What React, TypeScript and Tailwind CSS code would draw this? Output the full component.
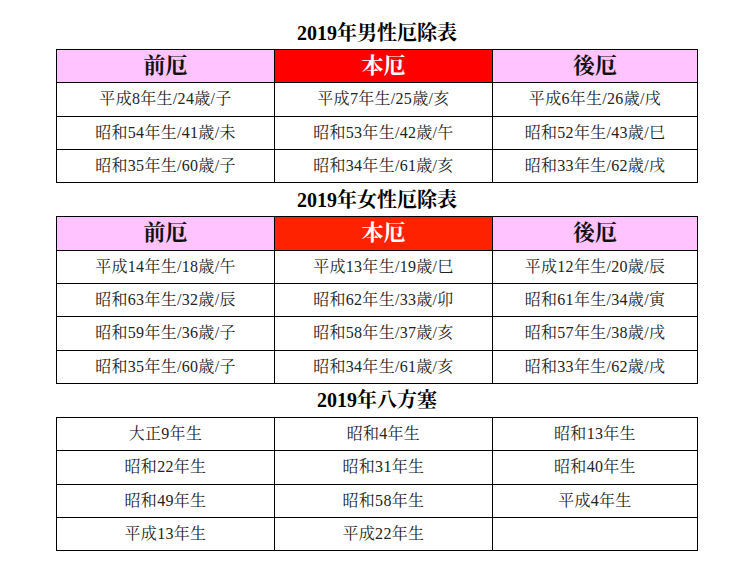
const font = {
  fontFamily: '"Liberation Serif", "Noto Serif CJK JP", "Noto Sans CJK JP", serif',
}

type Table = {
  title: string
  honBg?: string
  rows: string[][]
}

const tables: Table[] = [
  {
    title: "2019年男性厄除表",
    honBg: "bg-[#ff0000]",
    rows: [
      ["平成8年生/24歳/子", "平成7年生/25歳/亥", "平成6年生/26歳/戌"],
      ["昭和54年生/41歳/未", "昭和53年生/42歳/午", "昭和52年生/43歳/巳"],
      ["昭和35年生/60歳/子", "昭和34年生/61歳/亥", "昭和33年生/62歳/戌"],
    ],
  },
  {
    title: "2019年女性厄除表",
    honBg: "bg-[#ff2200]",
    rows: [
      ["平成14年生/18歳/午", "平成13年生/19歳/巳", "平成12年生/20歳/辰"],
      ["昭和63年生/32歳/辰", "昭和62年生/33歳/卯", "昭和61年生/34歳/寅"],
      ["昭和59年生/36歳/子", "昭和58年生/37歳/亥", "昭和57年生/38歳/戌"],
      ["昭和35年生/60歳/子", "昭和34年生/61歳/亥", "昭和33年生/62歳/戌"],
    ],
  },
  {
    title: "2019年八方塞",
    rows: [
      ["大正9年生", "昭和4年生", "昭和13年生"],
      ["昭和22年生", "昭和31年生", "昭和40年生"],
      ["昭和49年生", "昭和58年生", "平成4年生"],
      ["平成13年生", "平成22年生", ""],
    ],
  },
]

function YakuTable({ table }: { table: Table }) {
  return (
    <div>
      <h2 className="h-[33px] flex items-center justify-center text-[20px] font-bold text-black">
        {table.title}
      </h2>
      <table className="w-full border-collapse table-fixed">
        <colgroup>
          <col className="w-[34%]" />
          <col className="w-[34%]" />
          <col className="w-[32%]" />
        </colgroup>
        <tbody>
          {table.honBg && (
            <tr>
              <th className="h-[33.33px] p-0 border border-black bg-[#ffc4ff] text-[22px] font-bold text-[#111] leading-none">
                前厄
              </th>
              <th className={`h-[33.33px] p-0 border border-black ${table.honBg} text-[22px] font-bold text-white leading-none`}>
                本厄
              </th>
              <th className="h-[33.33px] p-0 border border-black bg-[#ffc4ff] text-[22px] font-bold text-[#111] leading-none">
                後厄
              </th>
            </tr>
          )}
          {table.rows.map((row, i) => (
            <tr key={i}>
              {row.map((cell, j) => (
                <td
                  key={j}
                  className="h-[33.33px] p-0 border border-black text-center text-[16px] text-[#222] leading-none tracking-[0.3px]"
                >
                  {cell}
                </td>
              ))}
            </tr>
          ))}
        </tbody>
      </table>
    </div>
  )
}

export default function App() {
  return (
    <div className="min-h-screen w-[750px] bg-white pt-[16px]" style={font}>
      <div className="ml-[56px] w-[642px]">
        {tables.map((t) => (
          <YakuTable key={t.title} table={t} />
        ))}
      </div>
    </div>
  )
}
